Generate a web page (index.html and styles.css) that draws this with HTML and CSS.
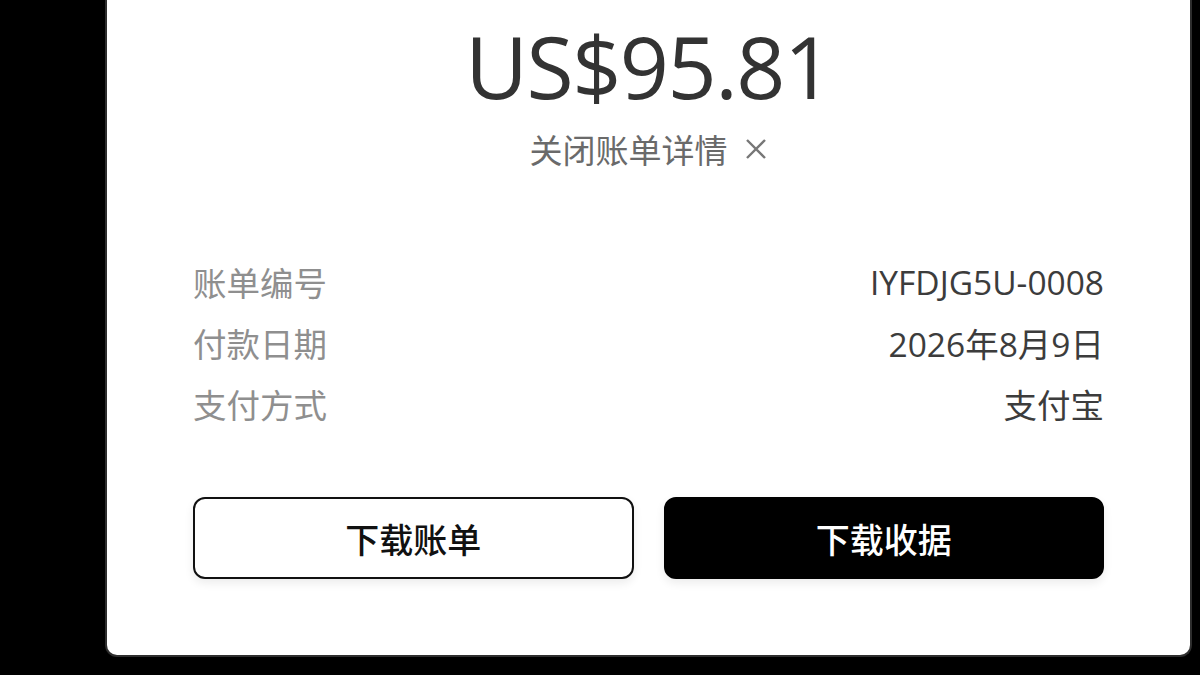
FILE: index.html
```html
<!DOCTYPE html>
<html>

<head>
	<meta charset="utf-8" />
	<title>账单详情</title>
	<meta name="viewport" content="width=device-width, initial-scale=1" />
	<link rel="stylesheet" href="styles.css">
</head>

<body>
	<main class="sheet">
		<section class="card">
			<p class="caption">账单金额</p>
			<h1 class="amount">US$95.81</h1>
			<button class="toggle" type="button">
				<span>关闭账单详情</span>
				<svg class="toggle-icon" viewBox="0 0 24 24" width="24" height="24" aria-hidden="true">
					<path d="M3 3 L21 21 M21 3 L3 21" />
				</svg>
			</button>

			<dl class="details">
				<div class="row">
					<dt>账单编号</dt>
					<dd>IYFDJG5U-0008</dd>
				</div>
				<div class="row">
					<dt>付款日期</dt>
					<dd>2026年8月9日</dd>
				</div>
				<div class="row">
					<dt>支付方式</dt>
					<dd>支付宝</dd>
				</div>
			</dl>

			<div class="actions">
				<button class="btn btn-outline" type="button">下载账单</button>
				<button class="btn btn-solid" type="button">下载收据</button>
			</div>
		</section>
	</main>
</body>

</html>
```

FILE: styles.css
```css
html,
body {
	margin: 0;
	padding: 0;
	background: #000;
	height: 100%;
	overflow: hidden;
}

body {
	font-family: "Open Sans", "Noto Sans CJK SC", sans-serif;
	color: #333;
}

.sheet {
	padding-left: 105px;
}

.card {
	width: 1083px;
	margin-top: -38px;
	padding: 0 0 76px 0;
	background: #fff;
	border: 2px solid #2e2e2e;
	border-top: 0;
	border-radius: 0 0 12px 12px;
	display: flex;
	flex-direction: column;
	align-items: center;
}

.caption {
	margin: 0;
	font-size: 30px;
	line-height: 40px;
	color: #bbb;
}

.amount {
	margin: 20px 0 0 0;
	font-size: 86px;
	line-height: 88px;
	font-weight: 500;
	color: #333;
	letter-spacing: -1.5px;
}

.toggle {
	margin-top: 19px;
	height: 40px;
	padding: 0;
	border: 0;
	background: none;
	display: flex;
	align-items: center;
	gap: 16px;
	font-family: "Noto Sans CJK SC", sans-serif;
	font-size: 33px;
	color: #6a6a6a;
	cursor: pointer;
}

.toggle-icon {
	width: 24px;
	height: 24px;
	fill: none;
	stroke: #777;
	stroke-width: 2.4;
}

.details {
	align-self: stretch;
	margin: 85px 86px 0 86px;
}

.row {
	display: flex;
	justify-content: space-between;
	align-items: center;
	height: 61px;
	font-size: 33.5px;
}

.row dt {
	font-family: "Noto Sans CJK SC", sans-serif;
	color: #8f8f8f;
	margin-top: -6px;
}

.row dd {
	margin: -6px 0 0 0;
	font-family: "Open Sans", "Noto Sans CJK SC", sans-serif;
	color: #3c3c3c;
}

.actions {
	align-self: stretch;
	margin: 60px 86px 0 86px;
	display: grid;
	grid-template-columns: 1fr 1fr;
	gap: 30px;
}

.btn {
	height: 82px;
	border-radius: 12px;
	font-family: "Noto Sans CJK SC", sans-serif;
	font-size: 34px;
	font-weight: 500;
	box-shadow: 0 4px 10px rgba(0, 0, 0, 0.08);
	cursor: pointer;
}

.btn-outline {
	background: #fff;
	color: #111;
	border: 2px solid #111;
}

.btn-solid {
	background: #000;
	color: #fff;
	border: 2px solid #000;
}
```
